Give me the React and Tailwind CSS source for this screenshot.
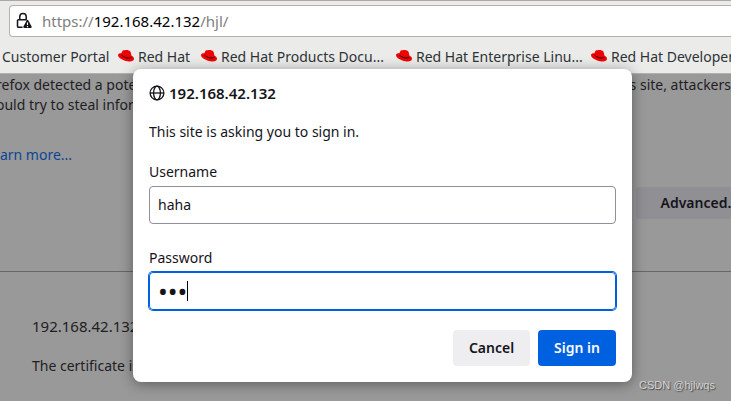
import { useState } from "react";

const bookmarks = [
  { id: 1, label: "Red Hat", width: "w-[83px]" },
  { id: 2, label: "Red Hat Products Docu...", width: "w-[195px]" },
  { id: 3, label: "Red Hat Enterprise Linu...", width: "w-[195px]" },
  { id: 4, label: "Red Hat Developer", width: "w-[195px]" },
];

const LockWarningIcon = () => (
  <svg width="16" height="18" viewBox="0 0 16 18" className="shrink-0">
    <path
      d="M3.8 7.5V4.6a3.2 3.2 0 0 1 6.4 0v2.9M6.5 15.3H2.6A1.1 1.1 0 0 1 1.5 14.2V8.8a1.1 1.1 0 0 1 1.1-1.1h8.3"
      fill="none"
      stroke="#15141a"
      strokeWidth="1.5"
    />
    <path
      d="M10.7 8.5a1 1 0 0 1 1.7 0l3.2 6a1 1 0 0 1-.9 1.5H8.3a1 1 0 0 1-.9-1.5z"
      fill="#15141a"
    />
    <path d="M11.5 10.5v2.6M11.5 14v1.2" stroke="#fff" strokeWidth="1.1" />
  </svg>
);

const RedHatIcon = () => (
  <svg width="16" height="12" viewBox="0 0 16 12" className="shrink-0">
    <path
      d="M4.3 1.2C4.7.1 5.7.2 6.5.3c.7.1 1.1-.2 1.8-.2 1.5 0 3.3.6 4 1.4.6.8.9 2.8 1.2 4.3 1.4.6 2.5 1.7 2.5 3 0 2.2-3.1 3.1-6.6 2.4C5.6 10.5.1 7.9 0 5.2c0-1.4 1.6-2 3.4-1.9z"
      fill="#f00000"
    />
    <path
      d="M3.5 3.5c-.3 1 .2 1.6 1.7 2.4 2.2 1.2 5 1.9 7 1.5 1.1-.2 1.5-.6 1.3-1.2l.1.9c.1.9-1 1.4-2.7 1.4-3 0-7.5-2.1-7.600-3.800z"
      fill="#180000"
    />
  </svg>
);

const GlobeIcon = () => (
  <svg
    width="16"
    height="16"
    viewBox="0 0 16 16"
    fill="none"
    stroke="#15141a"
    strokeWidth="1.3"
    className="shrink-0"
  >
    <circle cx="8" cy="8" r="6.9" />
    <ellipse cx="8" cy="8" rx="3.4" ry="6.9" />
    <path d="M1 8h14" />
  </svg>
);

const Toolbar = () => (
  <header className="border-t border-[#a9a8a7] bg-[#ebebea] text-[#2e3436]">
    <div className="mt-1 ml-[9px] flex h-8 items-center gap-2 rounded-l-[4px] border border-r-0 border-[#b3b1af] bg-white pl-[6px]">
      <LockWarningIcon />
      <p className="pl-[2px] text-[15px] text-[#808080]">
        https://<span className="text-black">192.168.42.132</span>/hjl/
      </p>
    </div>
    <nav className="flex h-[37px] items-center overflow-hidden border-b border-[#b3b1af] pt-[2px] pl-[2px] whitespace-nowrap">
      <a href="#portal" className="w-[116px] shrink-0">
        Customer Portal
      </a>
      {bookmarks.map((b) => (
        <a
          key={b.id}
          href="#redhat"
          className={`flex shrink-0 items-center gap-1 ${b.width}`}
        >
          <RedHatIcon />
          {b.label}
        </a>
      ))}
    </nav>
  </header>
);

const WarningPage = () => (
  <main className="flex-1 bg-[#99999a] text-[#1f1e24]">
    <div className="flex justify-between pt-px leading-5 whitespace-nowrap">
      <p className="-ml-1">
        refox detected a poten
        <br />
        ould try to steal inform
      </p>
      <p>this site, attackers</p>
    </div>
    <a
      href="#learn"
      className="mt-[30px] -ml-2 block w-fit leading-5 text-[#0b4596]"
    >
      earn more...
    </a>
    <div className="mt-[22px] flex justify-end">
      <button className="-mr-8 h-8 rounded-[4px] bg-[#8f8f94] px-6 pb-[2px] font-semibold text-[#15141a]">
        Advanced...
      </button>
    </div>
    <hr className="mt-[52px] border-[#67676a]" />
    <div className="pt-11 pl-8 leading-5">
      <p className="text-[15px]">192.168.42.132</p>
      <p className="mt-5">The certificate is</p>
    </div>
  </main>
);

const SignInDialog = () => {
  const [username, setUsername] = useState("haha");
  const [password, setPassword] = useState("abc");

  return (
    <form
      role="dialog"
      onSubmit={(e) => e.preventDefault()}
      className="absolute top-[69px] right-[99px] left-[133px] rounded-[8px] bg-white px-4 pt-[15px] pb-4 text-[#15141a] shadow-[0_2px_14px_rgba(0,0,0,0.4)]"
    >
      <div className="flex h-[18px] items-center gap-1 text-[15px] font-semibold">
        <GlobeIcon />
        192.168.42.132
      </div>
      <p className="mt-5 leading-5">This site is asking you to sign in.</p>

      <label htmlFor="username" className="mt-5 block leading-5">
        Username
      </label>
      <input
        id="username"
        type="text"
        value={username}
        onChange={(e) => setUsername(e.target.value)}
        className="mt-1 block h-[38px] w-full rounded-[4px] border border-[#8f8f9d] px-2 pb-[2px] outline-none"
      />

      <label htmlFor="password" className="mt-6 block leading-5">
        Password
      </label>
      <div className="relative mt-1">
        <input
          id="password"
          type="password"
          value={password}
          onChange={(e) => setPassword(e.target.value)}
          className="block h-[38px] w-full rounded-[4px] border border-[#0061e0] px-2 text-[26px] ring-1 ring-[#0061e0] outline-none"
        />
        {/* text caret */}
        <span className="absolute top-[9px] left-[38px] h-5 w-px bg-black" />
      </div>

      <div className="mt-5 flex justify-end gap-2 font-semibold">
        <button
          type="button"
          className="h-9 w-[77px] rounded-[4px] bg-[#eeeef0] pb-[2px]"
        >
          Cancel
        </button>
        <button
          type="submit"
          className="h-9 w-[78px] rounded-[4px] bg-[#0061e0] pb-[2px] text-[#fbfbfe]"
        >
          Sign in
        </button>
      </div>
    </form>
  );
};

const App = () => (
  <div className="relative flex min-h-screen flex-col overflow-hidden font-['Noto_Sans',sans-serif] text-[14px]">
    <Toolbar />
    <WarningPage />
    <SignInDialog />
    {/* watermark */}
    <span className="absolute right-4 bottom-2 font-['Liberation_Sans',sans-serif] text-[11px] text-[#d4d4d4] [text-shadow:1px_1px_1px_#444]">
      CSDN @hjlwqs
    </span>
  </div>
);

export default App;
